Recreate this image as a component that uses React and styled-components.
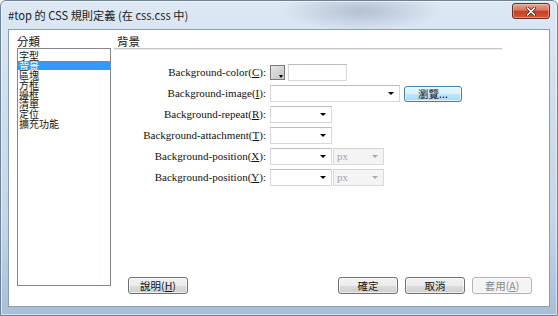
import React from 'react'
import styled, { createGlobalStyle } from 'styled-components'

const GlobalStyle = createGlobalStyle`
  html, body {
    margin: 0;
    padding: 0;
    background: #fff;
  }
  body {
    width: 558px;
    height: 316px;
    overflow: hidden;
  }
`

const cjk = `"Noto Sans CJK TC", "Noto Sans", sans-serif`

const Window = styled.div`
  box-sizing: border-box;
  width: 558px;
  height: 316px;
  display: flex;
  flex-direction: column;
  padding: 0 7px 8px 7px;
  border: 1px solid #6d8198;
  border-radius: 6px 6px 0 0;
  background:
    radial-gradient(ellipse 80px 20px at 360px 10px, rgba(105, 120, 138, 0.35), rgba(105, 120, 138, 0) 100%),
    linear-gradient(180deg, #dde8f4 0%, #d0dfee 30%, #c4d6e9 70%, #a8bfd7 100%);
  box-shadow: inset 0 0 0 1px rgba(255, 255, 255, 0.55);
`

const TitleBar = styled.div`
  height: 28px;
  display: flex;
  justify-content: space-between;
  align-items: flex-start;
`

const Title = styled.div`
  font-family: ${cjk};
  font-size: 11.2px;
  line-height: 28px;
  color: #1b1b1b;
  white-space: nowrap;
`

const CloseButton = styled.div`
  box-sizing: border-box;
  width: 38px;
  height: 16px;
  margin-top: 2px;
  display: flex;
  align-items: center;
  justify-content: center;
  border: 1px solid #6e2b21;
  border-radius: 3px;
  background: linear-gradient(180deg, #e8a496 0%, #d87461 45%, #c4401f 50%, #d2583a 100%);
  box-shadow: inset 0 0 0 1px rgba(255, 210, 200, 0.45);
`

const Client = styled.div`
  flex: 1;
  display: flex;
  background: #fff;
  border: 1px solid #8a9db3;
`

const LeftPane = styled.div`
  width: 94px;
  margin-left: 8px;
  padding-bottom: 20px;
  display: flex;
  flex-direction: column;
`

const PaneLabel = styled.div`
  height: 18px;
  line-height: 22px;
  font-family: ${cjk};
  font-size: 11.5px;
  color: #111;
`

const CategoryList = styled.ul`
  flex: 1;
  margin: 0;
  padding: 2px 0 0 0;
  list-style: none;
  border: 1px solid #828790;
`

const CategoryItem = styled.li`
  height: 9.7px;
  line-height: 9.7px;
  padding-left: 1px;
  font-family: ${cjk};
  font-size: 10px;
  color: ${(p) => (p.$selected ? '#fff' : '#111')};
  background: ${(p) => (p.$selected ? '#3399ff' : 'transparent')};
  white-space: nowrap;
`

const RightPane = styled.div`
  flex: 1;
  display: flex;
  flex-direction: column;
  padding-bottom: 12px;
`

const Heading = styled.div`
  box-sizing: border-box;
  width: 388px;
  height: 19px;
  margin-left: 3px;
  line-height: 22px;
  padding-left: 3px;
  font-family: ${cjk};
  font-size: 11.5px;
  color: #111;
  border-bottom: 1px solid #c4c4c4;
  box-shadow: 0 1px 0 #ececec;
`

const Form = styled.div`
  display: grid;
  grid-template-columns: 155px 1fr;
  grid-auto-rows: 17.5px;
  column-gap: 4px;
  row-gap: 3.5px;
  margin-top: 15px;
`

const FieldLabel = styled.div`
  text-align: right;
  font-family: "Liberation Serif", serif;
  font-size: 11px;
  line-height: 17.5px;
  color: #111;
  white-space: nowrap;
`

const Controls = styled.div`
  display: flex;
  align-items: center;
  gap: ${(p) => p.$gap ?? 0}px;
`

const TextBox = styled.div`
  box-sizing: border-box;
  width: ${(p) => p.$w}px;
  height: 17px;
  background: #fff;
  border: 1px solid #d5d8dd;
  border-top-color: #b9bdc4;
`

const Combo = styled.div`
  box-sizing: border-box;
  position: relative;
  width: ${(p) => p.$w}px;
  height: 17px;
  padding-left: 3px;
  font-family: "Liberation Serif", serif;
  font-size: 11px;
  line-height: 15px;
  color: ${(p) => (p.$disabled ? '#a4a4a4' : '#111')};
  background: ${(p) => (p.$disabled ? '#f4f4f4' : '#fff')};
  border: 1px solid ${(p) => (p.$disabled ? '#d9d9d9' : '#d5d8dd')};
  border-top-color: ${(p) => (p.$disabled ? '#d2d2d2' : '#b9bdc4')};

  &::after {
    content: '';
    position: absolute;
    right: 5px;
    top: 6px;
    border-left: 3px solid transparent;
    border-right: 3px solid transparent;
    border-top: 3px solid ${(p) => (p.$disabled ? '#a9a9a9' : '#000')};
  }
`

const Swatch = styled.div`
  box-sizing: border-box;
  position: relative;
  width: 15px;
  height: 15px;
  border: 1px solid #7b7b7b;
  background: linear-gradient(135deg, #e6e6e6 0%, #c3c3c3 100%);

  &::after {
    content: '';
    position: absolute;
    right: 1px;
    bottom: 1px;
    border-left: 2.5px solid transparent;
    border-right: 2.5px solid transparent;
    border-top: 3px solid #000;
  }
`

const BrowseButton = styled.div`
  box-sizing: border-box;
  width: 58px;
  height: 16px;
  border: 1px solid #3c7fb1;
  border-radius: 3px;
  background: linear-gradient(180deg, #eaf6fd 0%, #d9f0fc 50%, #bee6fd 50%, #a7d9f5 100%);
  box-shadow: inset 0 0 0 1px rgba(255, 255, 255, 0.7);
  font-family: ${cjk};
  font-size: 10.5px;
  line-height: 14px;
  text-align: center;
  color: #111;
`

const Footer = styled.div`
  margin-top: auto;
  display: flex;
  gap: 7px;
  padding: 0 17px;
`

const Spacer = styled.div`
  flex: 1;
`

const Button = styled.div`
  box-sizing: border-box;
  width: 60px;
  height: 17px;
  border: 1px solid ${(p) => (p.$disabled ? '#adb2b5' : '#707070')};
  border-radius: 3px;
  background: ${(p) =>
    p.$disabled
      ? '#f4f4f4'
      : 'linear-gradient(180deg, #f2f2f2 0%, #ebebeb 50%, #dddddd 50%, #cfcfcf 100%)'};
  box-shadow: inset 0 0 0 1px rgba(255, 255, 255, 0.6);
  font-family: ${cjk};
  font-size: 10.5px;
  line-height: 15px;
  text-align: center;
  color: ${(p) => (p.$disabled ? '#8a8a8a' : '#111')};
  white-space: nowrap;
`

const categories = ['字型', '背景', '區塊', '方框', '邊框', '清單', '定位', '擴充功能']

function Label({ name, k }) {
  return (
    <FieldLabel>
      {name}(<u>{k}</u>):
    </FieldLabel>
  )
}

export default function App() {
  return (
    <>
      <GlobalStyle />
      <Window>
        <TitleBar>
          <Title>#top 的 CSS 規則定義 (在 css.css 中)</Title>
          <CloseButton>
            <svg width="10" height="9" viewBox="0 0 10 9">
              <path d="M1.5 1 L8.5 8 M8.5 1 L1.5 8" stroke="#5a1d14" strokeWidth="3" strokeLinecap="round" />
              <path d="M1.5 1 L8.5 8 M8.5 1 L1.5 8" stroke="#fff" strokeWidth="1.6" strokeLinecap="round" />
            </svg>
          </CloseButton>
        </TitleBar>
        <Client>
          <LeftPane>
            <PaneLabel>分類</PaneLabel>
            <CategoryList>
              {categories.map((c) => (
                <CategoryItem key={c} $selected={c === '背景'}>
                  {c}
                </CategoryItem>
              ))}
            </CategoryList>
          </LeftPane>
          <RightPane>
            <Heading>背景</Heading>
            <Form>
              <Label name="Background-color" k="C" />
              <Controls $gap={3}>
                <Swatch />
                <TextBox $w={59} />
              </Controls>

              <Label name="Background-image" k="I" />
              <Controls $gap={4}>
                <Combo $w={130} />
                <BrowseButton>瀏覽...</BrowseButton>
              </Controls>

              <Label name="Background-repeat" k="R" />
              <Controls>
                <Combo $w={62} />
              </Controls>

              <Label name="Background-attachment" k="T" />
              <Controls>
                <Combo $w={62} />
              </Controls>

              <Label name="Background-position" k="X" />
              <Controls $gap={1}>
                <Combo $w={62} />
                <Combo $w={51} $disabled>px</Combo>
              </Controls>

              <Label name="Background-position" k="Y" />
              <Controls $gap={1}>
                <Combo $w={62} />
                <Combo $w={51} $disabled>px</Combo>
              </Controls>
            </Form>
            <Footer>
              <Button>
                說明(<u>H</u>)
              </Button>
              <Spacer />
              <Button>確定</Button>
              <Button>取消</Button>
              <Button $disabled>
                套用(<u>A</u>)
              </Button>
            </Footer>
          </RightPane>
        </Client>
      </Window>
    </>
  )
}
